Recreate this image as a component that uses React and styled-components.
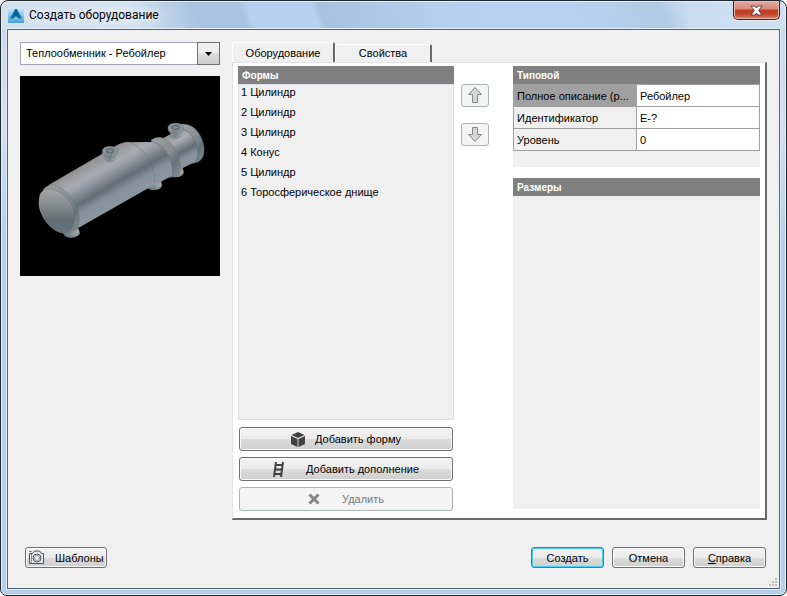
import React from 'react';
import styled, { createGlobalStyle, css } from 'styled-components';

const GlobalStyle = createGlobalStyle`
  *, *::before, *::after { box-sizing: border-box; }
  body {
    margin: 0;
    background: #fff;
    color: #000;
    font-family: "Liberation Sans", Arial, sans-serif;
    font-size: 11px;
    line-height: 14px;
  }
  button, input, select { font: inherit; color: inherit; margin: 0; }
`;

const Window = styled.div`
  display: flex;
  flex-direction: column;
  min-height: 100vh;
  padding: 0 6px 6px;
  border: 1px solid #1f262d;
  border-radius: 8px 8px 7px 7px;
  background:
    linear-gradient(70deg, #d3e0ee 0%, #d5e3f1 17%, #a9c4e0 25%, #a9c4e0 31%, #b6d2ee 32%, #b6d2ee 40%, #a6c2de 41%, #b6d2ee 58%, #b7d3ef 72%, #b1cbe6 84%, #c9dcf0 87%, #d0e1f3 100%) top / 100% 28px no-repeat,
    linear-gradient(180deg, #c9dcef 28px, #cfe0f1 130px, #b4cfeb 240px, #b4cfeb 100%);
  box-shadow: inset 0 0 0 1px #e6f0fa;
`;

const TitleBar = styled.header`
  display: flex;
  align-items: flex-start;
  height: 28px;
`;

const Caption = styled.div`
  display: flex;
  align-items: center;
  flex: 1;
  gap: 5px;
  padding: 6px 0 0 1px;
`;

const Title = styled.h1`
  margin: 0;
  font: 12px/16px Roboto, "Open Sans", sans-serif;
  text-shadow: 0 0 8px #fff, 0 0 12px #fff;
`;

const CloseButton = styled.button`
  display: grid;
  place-items: center;
  width: 47px;
  height: 19px;
  padding: 0;
  border: 1px solid #4b1410;
  border-top: 0;
  border-radius: 0 0 5px 5px;
  background: linear-gradient(#e5aaa0 0%, #d88878 45%, #bd3a20 50%, #c5482c 75%, #dd8a6c 100%);
  box-shadow: inset 0 0 0 1px #ecbcb2, 0 1px 0 #eef5fb;
`;

const Client = styled.main`
  display: flex;
  flex-direction: column;
  flex: 1;
  padding: 12px 12px 0;
  border: 1px solid #586672;
  background: #f0f0f0;
  box-shadow: 0 0 0 1px #e1edf8;
`;

const Content = styled.div`
  display: flex;
  flex: 1;
  gap: 12px;
`;

const Sidebar = styled.section`
  display: flex;
  flex-direction: column;
  gap: 11px;
  width: 200px;
`;

const SelectBox = styled.div`
  display: grid;
  grid-template-columns: 1fr 23px;
  height: 23px;
`;

const Select = styled.select`
  grid-area: 1 / 1 / 2 / 3;
  width: 100%;
  padding: 0 26px 2px 5px;
  border: 1px solid #a3a6b0;
  border-radius: 0;
  background: #fff;
  appearance: none;
`;

const SelectArrow = styled.span`
  display: grid;
  grid-area: 1 / 2;
  place-items: center;
  border: 1px solid #707070;
  background: linear-gradient(#f2f2f2 0%, #ebebeb 50%, #dddddd 50%, #cfcfcf 100%);
  pointer-events: none;
`;

const Preview = styled.svg`
  display: block;
  width: 200px;
  height: 200px;
  background: #000;
`;

const Tabs = styled.section`
  display: flex;
  flex: 1;
  flex-direction: column;
`;

const TabList = styled.div`
  display: flex;
  align-items: flex-end;
  height: 20px;
`;

const Tab = styled.button`
  width: ${({ $active }) => ($active ? '103px' : '97px')};
  height: ${({ $active }) => ($active ? '20px' : '18px')};
  padding: 0 0 ${({ $active }) => ($active ? '0' : '2px')};
  border: 0;
  border-top: 1px solid #fff;
  border-left: 1px solid #fff;
  border-right: 2px solid #696969;
  border-radius: 3px 2px 0 0;
  background: #f0f0f0;
`;

const Panel = styled.div`
  display: flex;
  flex: 1;
  gap: 7px;
  padding: 3px 5px 7px;
  border: 1px solid #e3e3e3;
  border-right: 2px solid #696969;
  border-bottom: 2px solid #696969;
  background: #fff;
`;

const ShapesColumn = styled.div`
  display: flex;
  flex: 7;
  flex-direction: column;
`;

const GroupHeader = styled.h2`
  height: 18px;
  margin: 0;
  padding-left: 4px;
  background: #808080;
  color: #fff;
  font-size: 10px;
  line-height: 19px;
`;

const ShapeList = styled.ul`
  flex: 1;
  margin: 0 0 7px;
  padding: 0;
  border: 1px solid #dcdce4;
  background: #f0f0f0;
  list-style: none;
`;

const ShapeItem = styled.li`
  height: 20px;
  padding-left: 2px;
`;

const Actions = styled.div`
  display: flex;
  flex-direction: column;
  gap: 6px;
  padding: 0 1px;
`;

const Button = styled.button`
  display: flex;
  align-items: center;
  justify-content: center;
  gap: ${({ $gap }) => $gap || '0'};
  min-width: ${({ $wide }) => ($wide ? '0' : '73px')};
  height: ${({ $wide }) => ($wide ? '24px' : '21px')};
  padding: 0 2px;
  border: 1px solid #707070;
  border-radius: 3px;
  background: linear-gradient(#f4f4f4 0%, #ebebeb 50%, #dcdcdc 50%, #cfcfcf 100%);
  box-shadow: inset 0 0 0 1px #fafafa;
  ${({ $primary }) => $primary && css`
    border-color: #3c7fb1;
    box-shadow: inset 0 0 0 1px #43cdf3;
  `}
  &:disabled {
    border-color: #adb2b5;
    background: #f4f4f4;
    box-shadow: none;
    color: #777;
  }
`;

const Movers = styled.div`
  display: flex;
  flex-direction: column;
  gap: 16px;
  width: 28px;
  margin: 18px 17px 0 0;
`;

const MoveButton = styled(Button)`
  min-width: 28px;
  height: 23px;
`;

const Properties = styled.div`
  display: flex;
  flex: 8;
  flex-direction: column;
  gap: 11px;
  padding-bottom: 2px;
`;

const Group = styled.section`
  flex: ${({ $grow }) => ($grow ? 1 : 'none')};
  padding-bottom: 16px;
  background: #f0f0f0;
`;

const PropertyTable = styled.table`
  width: 100%;
  border-collapse: collapse;
  table-layout: fixed;
`;

const PropertyName = styled.th`
  width: 50%;
  height: 22px;
  padding: 0 0 0 3px;
  border: 1px solid #a0a0a0;
  background: ${({ $selected }) => ($selected ? '#a0a0a0' : '#f0f0f0')};
  font-weight: normal;
  text-align: left;
  white-space: nowrap;
`;

const PropertyCell = styled.td`
  height: 22px;
  padding: 0;
  border: 1px solid #a0a0a0;
  background: #fff;
`;

const PropertyInput = styled.input`
  display: block;
  width: 100%;
  height: 20px;
  padding: 0 3px;
  border: 0;
  background: transparent;
  outline: 0;
`;

const Footer = styled.footer`
  display: flex;
  align-items: flex-start;
  gap: 8px;
  height: 68px;
  padding: 27px 1px 0 5px;
`;

const Spacer = styled.span`
  flex: 1;
`;

const Resize = styled.svg`
  align-self: flex-end;
  width: 10px;
  height: 10px;
  margin: 0 -12px 1px -6px;
`;

const AppIcon = () => (
  <svg width="16" height="16" viewBox="0 0 16 16" aria-hidden="true">
    <defs>
      <linearGradient id="appBg" x1="0" y1="0" x2="0" y2="1">
        <stop offset="0" stopColor="#d8edf7" /><stop offset="1" stopColor="#479fd0" />
      </linearGradient>
    </defs>
    <path d="M0 0h16v16H0z" fill="url(#appBg)" />
    <path d="M7 2h2l5 9-3 1-3-3-3 3-3-1z" fill="#1180bb" />
    <path d="M8 2 4 11l4-2 4 2z" fill="#075f98" />
    <path d="m8 10-2 2h4z" fill="#8dd3ed" />
  </svg>
);

const CloseIcon = () => (
  <svg width="13" height="11" viewBox="0 0 13 11" aria-hidden="true">
    <path d="M1 1h4l1.500 2L8 1h4L8.700 5.500 12 10H8L6.500 8 5 10H1l3.300-4.500z" fill="#fff" stroke="#57434b" />
  </svg>
);

const CubeIcon = () => (
  <svg width="14" height="15" viewBox="0 0 14 15" aria-hidden="true">
    <path d="m7 0 6.500 3L7 6 .5 3z M0 4l6.500 3v8L0 12z M14 4 7.500 7v8L14 12z" fill="#414141" />
  </svg>
);

const LadderIcon = () => (
  <svg width="11" height="15" viewBox="0 0 11 15" aria-hidden="true">
    <path d="M3 0 1 15M10 0 8 15M2.500 3h7M2 7.500h7M1.500 12h7" fill="none" stroke="#414141" strokeWidth="2" />
  </svg>
);

const DeleteIcon = () => (
  <svg width="12" height="12" viewBox="0 0 12 12" aria-hidden="true">
    <path d="m1.500 1.500 9 9M10.500 1.500l-9 9" stroke="#858585" strokeWidth="3" />
  </svg>
);

const ArrowIcon = ({ down }) => (
  <svg width="14" height="17" viewBox="0 0 14 17" aria-hidden="true">
    <path
      d={down ? 'M4.500 1.500h5v7h4L7 15.500.5 8.500h4z' : 'M7 .5l6.500 7h-4v8h-5v-8h-4z'}
      fill="#d6d6d6"
      stroke="#858585"
    />
  </svg>
);

const CameraIcon = () => (
  <svg width="17" height="15" viewBox="0 0 17 15" fill="none" stroke="#4a5157" aria-hidden="true">
    <path d="M1.500 3.500h3l2-2.500h5l2 2.500h2v10h-14zM1.500 1.500h2" fill="#e9ecee" />
    <circle cx="9" cy="8" r="4" fill="#f8f8f8" />
    <circle cx="9" cy="8" r="2.500" stroke="#879098" />
    <path d="M3.500 4v9" stroke="#879098" />
  </svg>
);

const Nozzle = ({ x, y }) => (
  <g transform={`translate(${x} ${y})`} stroke="#535d63" strokeWidth="1">
    <path d="M-15 12v13q15 10 29 0V12z" fill="url(#neck)" />
    <path d="M-23-3v8q7 13 23 13t23-13v-8z" fill="url(#neck)" />
    <ellipse cy="-3" rx="23" ry="13" fill="#8d989d" />
    <ellipse cy="-3" rx="13" ry="8" fill="#657176" />
    <path d="M-10-2Q0-10 10-3 0 7-10-2z" fill="#879399" />
  </g>
);

const Foot = ({ x, y }) => (
  <g transform={`translate(${x} ${y})`}>
    <path d="M-25-6 18-16q6 6 6 17-6 13-25 13T-25 2z" fill="url(#foot)" />
    <path d="M-25 0q4 10 24 10t25-13" fill="none" stroke="#59656a" />
  </g>
);

const EquipmentPreview = () => (
  <Preview viewBox="15 18 600 600" role="img" aria-label="Ребойлер">
    <defs>
      <linearGradient id="steel" gradientUnits="userSpaceOnUse" x1="200" y1="290" x2="276" y2="424">
        <stop offset="0" stopColor="#929391" /><stop offset=".24" stopColor="#a9abb3" />
        <stop offset=".34" stopColor="#9b9fa7" /><stop offset=".61" stopColor="#626e75" />
        <stop offset=".78" stopColor="#87919a" /><stop offset="1" stopColor="#8b969e" />
      </linearGradient>
      <linearGradient id="pipe" gradientUnits="userSpaceOnUse" x1="457" y1="195" x2="508" y2="288">
        <stop offset="0" stopColor="#8e9090" /><stop offset=".28" stopColor="#abadb4" />
        <stop offset=".62" stopColor="#616d74" /><stop offset=".82" stopColor="#88939c" />
        <stop offset="1" stopColor="#87929a" />
      </linearGradient>
      <linearGradient id="head" x1="0" y1="0" x2="0" y2="1">
        <stop offset="0" stopColor="#aaa9a5" /><stop offset=".35" stopColor="#848d92" />
        <stop offset=".7" stopColor="#626e74" /><stop offset="1" stopColor="#66737a" />
      </linearGradient>
      <linearGradient id="rim" x1="0" y1="0" x2="1" y2="1">
        <stop offset="0" stopColor="#a2a39f" /><stop offset=".5" stopColor="#858f94" />
        <stop offset=".72" stopColor="#65727a" /><stop offset="1" stopColor="#87939a" />
      </linearGradient>
      <linearGradient id="neck">
        <stop stopColor="#8f989d" /><stop offset=".5" stopColor="#76858e" /><stop offset="1" stopColor="#a2aaad" />
      </linearGradient>
      <linearGradient id="foot">
        <stop stopColor="#69767e" /><stop offset=".6" stopColor="#86949c" /><stop offset="1" stopColor="#b0aca0" />
      </linearGradient>
    </defs>
    <Foot x={170} y={489} />
    <Foot x={417} y={346} />
    <Foot x={482} y={308} />
    <path d="M492 164q20-7 42 7c26 20 39 60 31 86-7 17-23 26-43 22z" fill="url(#rim)" stroke="#5f6c70" />
    <path d="m440 207 58-32q28 6 43 39 14 31 3 60l-54 27q0-62-50-94z" fill="url(#pipe)" />
    <path d="M498 175q28 6 43 39 14 31 3 60" fill="none" stroke="#616c70" strokeWidth="2" />
    <path d="M408 210q17-12 34-7c31 10 56 57 55 96-2 18-23 25-45 22z" fill="url(#rim)" stroke="#657176" />
    <path d="m330 217 83-1q30 9 49 44 15 32 9 57l-56 30z" fill="url(#steel)" />
    <path d="M413 215q30 9 49 44 15 32 9 57" fill="none" stroke="#626f73" strokeWidth="2" />
    <path d="m101 345 202-118q35-20 64-3c36 24 58 79 48 122L190 474z" fill="url(#steel)" />
    <path d="M345 217c47 18 77 79 74 122" fill="none" stroke="#586469" />
    <path d="M75 382q9-39 42-38c37 10 75 57 76 111q-4 34-38 36c-35 1-82-44-84-91z" fill="url(#rim)" />
    <path d="M76 371q10-18 38-12c35 8 65 45 65 83q-3 42-34 48c-41-2-83-64-71-114z" fill="url(#head)" />
    <path d="M76 371q10-18 38-12c35 8 65 45 65 83q-3 42-34 48M102 345c44-7 90 54 91 103q-3 26-16 35" fill="none" stroke="#586367" />
    <Nozzle x={285} y={245} />
    <Nozzle x={482} y={175} />
  </Preview>
);

const shapes = ['Цилиндр', 'Цилиндр', 'Цилиндр', 'Конус', 'Цилиндр', 'Торосферическое днище'];

const properties = [
  { id: 'description', name: 'Полное описание (р...', value: 'Ребойлер', selected: true },
  { id: 'tag', name: 'Идентификатор', value: 'E-?' },
  { id: 'level', name: 'Уровень', value: '0' },
];

export default function App() {
  return (
    <>
      <GlobalStyle />
      <Window>
        <TitleBar>
          <Caption>
            <AppIcon />
            <Title>Создать оборудование</Title>
          </Caption>
          <CloseButton type="button" aria-label="Закрыть"><CloseIcon /></CloseButton>
        </TitleBar>
        <Client>
          <Content>
            <Sidebar>
              <SelectBox>
                <Select aria-label="Тип оборудования">
                  <option>Теплообменник - Ребойлер</option>
                </Select>
                <SelectArrow>
                  <svg width="7" height="4" viewBox="0 0 7 4" aria-hidden="true"><path d="M0 0h7L3.500 4z" /></svg>
                </SelectArrow>
              </SelectBox>
              <EquipmentPreview />
            </Sidebar>
            <Tabs>
              <TabList role="tablist">
                <Tab type="button" role="tab" aria-selected="true" $active>Оборудование</Tab>
                <Tab type="button" role="tab" aria-selected="false">Свойства</Tab>
              </TabList>
              <Panel role="tabpanel">
                <ShapesColumn>
                  <GroupHeader>Формы</GroupHeader>
                  <ShapeList>
                    {shapes.map((shape, index) => (
                      <ShapeItem key={index}>{`${index + 1} ${shape}`}</ShapeItem>
                    ))}
                  </ShapeList>
                  <Actions>
                    <Button type="button" $wide $gap="10px"><CubeIcon />Добавить форму</Button>
                    <Button type="button" $wide $gap="22px"><LadderIcon />Добавить дополнение</Button>
                    <Button type="button" $wide $gap="22px" disabled><DeleteIcon />Удалить</Button>
                  </Actions>
                </ShapesColumn>
                <Movers>
                  <MoveButton type="button" disabled aria-label="Вверх"><ArrowIcon /></MoveButton>
                  <MoveButton type="button" disabled aria-label="Вниз"><ArrowIcon down /></MoveButton>
                </Movers>
                <Properties>
                  <Group>
                    <GroupHeader>Типовой</GroupHeader>
                    <PropertyTable>
                      <tbody>
                        {properties.map(({ id, name, value, selected }) => (
                          <tr key={id}>
                            <PropertyName scope="row" $selected={selected}>
                              <label htmlFor={id}>{name}</label>
                            </PropertyName>
                            <PropertyCell><PropertyInput id={id} defaultValue={value} /></PropertyCell>
                          </tr>
                        ))}
                      </tbody>
                    </PropertyTable>
                  </Group>
                  <Group $grow>
                    <GroupHeader>Размеры</GroupHeader>
                  </Group>
                </Properties>
              </Panel>
            </Tabs>
          </Content>
          <Footer>
            <Button type="button" $gap="10px"><CameraIcon />Шаблоны</Button>
            <Spacer />
            <Button type="button" $primary><span>Соз<u>д</u>ать</span></Button>
            <Button type="button">Отмена</Button>
            <Button type="button"><span><u>С</u>правка</span></Button>
            <Resize viewBox="0 0 10 10" aria-hidden="true">
              <path d="M7 1h2v2H7zM4 4h2v2H4zM7 4h2v2H7zM1 7h2v2H1zM4 7h2v2H4zM7 7h2v2H7z" fill="#bdbdbd" />
            </Resize>
          </Footer>
        </Client>
      </Window>
    </>
  );
}
